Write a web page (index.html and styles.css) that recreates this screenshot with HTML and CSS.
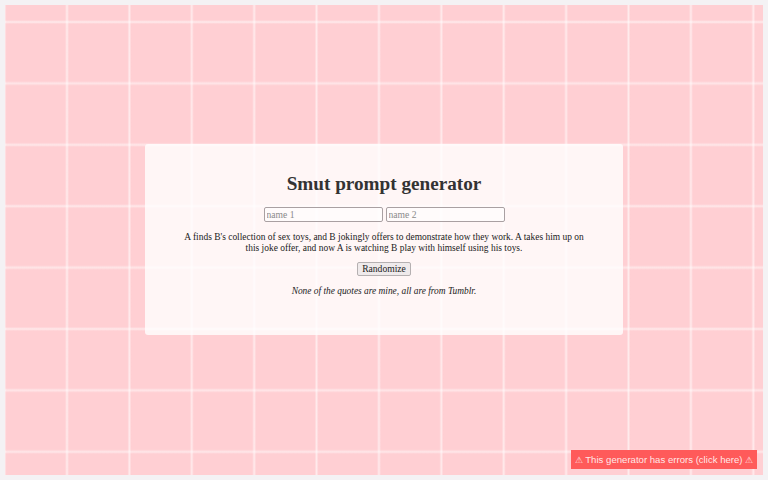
FILE: index.html
```html
<!DOCTYPE html>
<html>
<head>
<meta charset="utf-8">
<link rel="stylesheet" href="styles.css">
</head>
<body>
<div class="frame">
  <div class="card">
    <h1 class="title">Smut prompt generator</h1>
    <div class="names">
      <input class="name" type="text" placeholder="name 1">
      <input class="name" type="text" placeholder="name 2">
    </div>
    <p class="prompt">A finds B's collection of sex toys, and B jokingly offers to demonstrate how they work. A takes him up on this joke offer, and now A is watching B play with himself using his toys.</p>
    <button class="rand" type="button">Randomize</button>
    <p class="note">None of the quotes are mine, all are from Tumblr.</p>
  </div>
  <div class="errors"><span class="warn">⚠</span> This generator has errors (click here) <span class="warn">⚠</span></div>
</div>
</body>
</html>
```
FILE: styles.css
```css
html, body {
  margin: 0;
  padding: 0;
  height: 100%;
}
body {
  background: #f4f2f4;
  padding: 5px;
  box-sizing: border-box;
  font-family: "Liberation Serif", "Times New Roman", serif;
  color: #222;
}
.frame {
  position: relative;
  width: 758px;
  height: 470px;
  background-color: #ffcfd3;
  background-image:
    linear-gradient(to right, transparent 29.2px, rgba(255,255,255,0.28) 30.2px, rgba(255,255,255,0.58) 31.2px, rgba(255,255,255,0.28) 32.2px, transparent 33.2px),
    linear-gradient(to bottom, transparent 28.7px, rgba(255,255,255,0.28) 29.7px, rgba(255,255,255,0.58) 30.7px, rgba(255,255,255,0.28) 31.7px, transparent 32.7px);
  background-size: 62.4px 100%, 100% 61.4px;
  background-position: 30.8px 0, 0 -13.7px;
  display: flex;
  align-items: center;
  justify-content: center;
}
.card {
  width: 478px;
  height: 191px;
  box-sizing: border-box;
  background: rgba(255,255,255,0.8);
  border-radius: 3px;
  padding-top: 28px;
  display: flex;
  flex-direction: column;
  align-items: center;
  margin-top: -1px;
}
.title {
  margin: 0;
  font-size: 19.2px;
  line-height: 24px;
  font-weight: bold;
  color: #333;
}
.names {
  margin-top: 11px;
  display: flex;
  gap: 3px;
}
.name {
  width: 119px;
  height: 15px;
  box-sizing: border-box;
  border: 1px solid #a9a0a2;
  border-radius: 2px;
  background: rgba(255,255,255,0.6);
  font-family: "Liberation Serif", serif;
  font-size: 9.6px;
  padding: 0 2px;
  margin: 0;
  color: #333;
}
.name::placeholder {
  color: #8a8a8a;
}
.prompt {
  margin: 10px 0 0;
  width: 404px;
  text-align: center;
  font-size: 9.45px;
  line-height: 10.5px;
}
.rand {
  margin-top: 9px;
  height: 14px;
  padding: 0 4px;
  font-family: "Liberation Serif", serif;
  font-size: 9.6px;
  line-height: 12px;
  color: #222;
  background: #efeaeb;
  border: 1px solid #b5b0b1;
  border-radius: 2px;
}
.note {
  margin: 10px 0 0;
  font-size: 9.4px;
  line-height: 11px;
  font-style: italic;
}
.errors {
  position: absolute;
  right: 6px;
  bottom: 6px;
  width: 186px;
  height: 19px;
  box-sizing: border-box;
  background: #ff5a5a;
  color: rgba(255,255,255,0.88);
  font-family: "Liberation Sans", Arial, sans-serif;
  font-size: 9.6px;
  line-height: 19px;
  text-align: center;
  white-space: nowrap;
}
.warn {
  font-size: 8.5px;
}
```
